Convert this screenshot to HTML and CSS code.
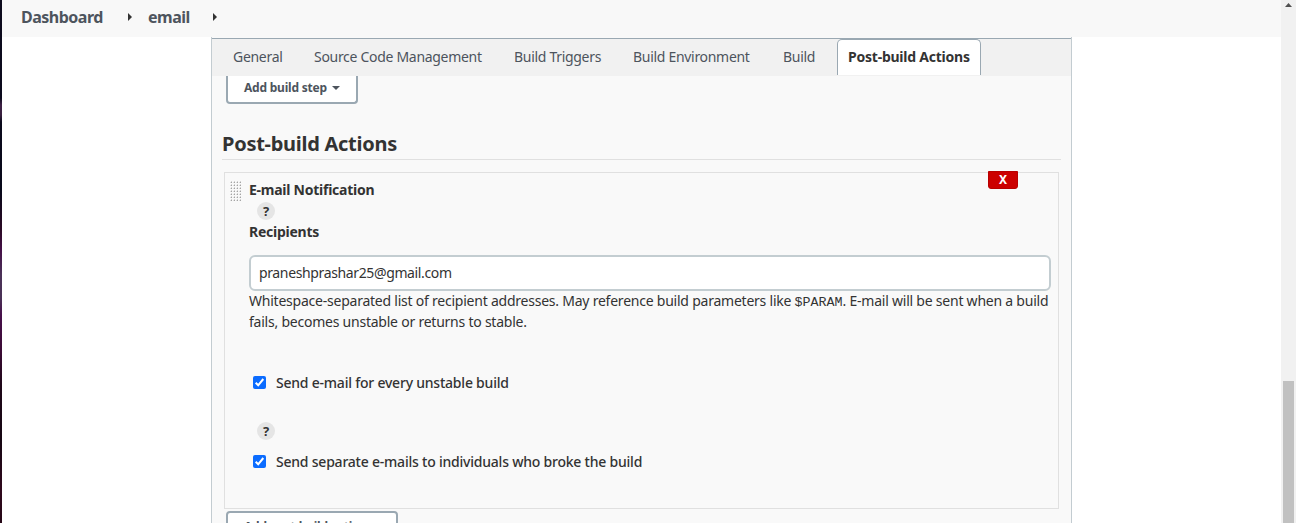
FILE: index.html
```html
<!DOCTYPE html>
<html lang="en">
<head>
<meta charset="utf-8">
<title>email Config</title>
<link rel="stylesheet" href="styles.css">
</head>
<body>
<div class="desktop-edge"></div>
<div class="page">
  <nav class="breadcrumbs">
    <a class="crumb crumb-home">Dashboard</a>
    <svg class="crumb-arrow" width="4" height="8" viewBox="0 0 4 8"><path d="M0 0L4 4L0 8Z" fill="#333"/></svg>
    <a class="crumb crumb-job">email</a>
    <svg class="crumb-arrow" width="4" height="8" viewBox="0 0 4 8"><path d="M0 0L4 4L0 8Z" fill="#333"/></svg>
  </nav>
  <main class="config">
    <div class="tabs">
      <a class="tab tab-general">General</a>
      <a class="tab tab-scm">Source Code Management</a>
      <a class="tab tab-triggers">Build Triggers</a>
      <a class="tab tab-env">Build Environment</a>
      <a class="tab tab-build">Build</a>
      <a class="tab tab-active">Post-build Actions</a>
    </div>
    <div class="form">
      <button class="menu-button step-button"><span>Add build step</span><svg width="8" height="4" viewBox="0 0 8 4"><path d="M0 0H8L4 4Z" fill="#4d545d"/></svg></button>
      <h2 class="section-title">Post-build Actions</h2>
      <section class="chunk">
        <svg class="drag-handle" width="12" height="21">
          <defs><pattern id="grip" width="3" height="3" patternUnits="userSpaceOnUse"><rect x="1" width="1" height="1" fill="#d4d4d4"/><rect y="1" width="1" height="1" fill="#dedede"/><rect x="1" y="1" width="1" height="1" fill="#a5a5a5"/></pattern></defs>
          <rect width="12" height="21" fill="url(#grip)"/>
        </svg>
        <button class="delete">X</button>
        <div class="fields">
          <div class="label">E-mail Notification</div>
          <span class="help">?</span>
          <div class="label">Recipients</div>
          <div class="input">praneshprashar25@gmail.com</div>
          <p class="hint">Whitespace-separated list of recipient addresses. May reference build parameters like <code>$PARAM</code>. E-mail will be sent when a build<br>fails, becomes unstable or returns to stable.</p>
          <label class="check check-unstable"><svg width="13" height="13" viewBox="0 0 13 13"><rect width="13" height="13" rx="2" fill="#0b6cff"/><path d="M2.7 6.8L5.2 9.3L10.3 3" fill="none" stroke="#fff" stroke-width="2"/></svg><span>Send e-mail for every unstable build</span></label>
          <span class="help help-second">?</span>
          <label class="check"><svg width="13" height="13" viewBox="0 0 13 13"><rect width="13" height="13" rx="2" fill="#0b6cff"/><path d="M2.7 6.8L5.2 9.3L10.3 3" fill="none" stroke="#fff" stroke-width="2"/></svg><span>Send separate e-mails to individuals who broke the build</span></label>
        </div>
      </section>
      <button class="menu-button action-button"><span>Add post-build action</span><svg width="8" height="4" viewBox="0 0 8 4"><path d="M0 0H8L4 4Z" fill="#4d545d"/></svg></button>
    </div>
  </main>
</div>
<div class="scrollbar">
  <svg class="scroll-up" width="7" height="4" viewBox="0 0 7 4"><path d="M0 4L3.5 0L7 4Z" fill="#505050"/></svg>
  <div class="scroll-thumb"></div>
</div>
</body>
</html>
```

FILE: styles.css
```css
* { box-sizing: border-box; }
body {
  margin: 0;
  width: 1296px;
  height: 523px;
  display: flex;
  overflow: hidden;
  background: #fff;
  color: #333;
  font: 14px/21px "Noto Sans", "Open Sans", sans-serif;
  white-space: nowrap;
}
svg { display: block; flex: none; }
button { font-family: inherit; margin: 0; }

.desktop-edge {
  flex: 0 0 2px;
  background: linear-gradient(#0d0b1d 0, #0b0a1d 98px, #3e2145 105px, #38203f 115px, #0b0a1c 122px, #08091a 190px, #2b0a26 230px, #451048 250px, #4b3258 275px, #4a3156 298px, #47104b 315px, #3c0b36 350px, #1f0819 385px, #160713 440px, #30091d 490px, #260817 523px);
}
.page { flex: 1; display: flex; flex-direction: column; min-width: 0; }

.breadcrumbs {
  flex: 0 0 37px;
  display: flex;
  align-items: center;
  padding: 0 0 3px 19px;
  background: #f8f8f8;
}
.crumb { color: #4d545d; font-size: 16px; font-weight: 700; line-height: 24px; letter-spacing: -0.5px; }
.crumb-home { width: 107px; }
.crumb-job { width: 65px; margin-left: 16px; }

.config {
  flex: 1;
  display: flex;
  flex-direction: column;
  width: 861px;
  margin-left: 209px;
  border: solid #c3ccd1;
  border-width: 0 1px;
  background: #f9f9f9;
}
.tabs {
  flex: 0 0 38px;
  display: flex;
  margin-top: 1px;
  padding-left: 21px;
  border-top: 1px solid #9aa8b2;
  background: #f1f1f1;
}
.tab { padding-top: 7px; color: #4d545d; letter-spacing: -0.3px; }
.tab-general { width: 81px; }
.tab-scm { width: 200px; }
.tab-triggers { width: 119px; }
.tab-env { width: 150px; }
.tab-build { width: 54px; }
.tab-active {
  width: 144px;
  height: 36px;
  padding: 6px 0 0 10px;
  border: 1px solid #9aa8b2;
  border-bottom: 0;
  border-radius: 5px 5px 0 0;
  background: #fff;
  color: #333;
  font-weight: 700;
  letter-spacing: -0.23px;
}

.form { display: flex; flex-direction: column; align-items: flex-start; padding-left: 10px; }
.menu-button {
  display: flex;
  align-items: center;
  gap: 5px;
  margin-left: 4px;
  padding: 0 0 0 16px;
  border: 2px solid #9aa8b2;
  border-radius: 4px;
  background: #fff;
  color: #4d545d;
  font-size: 12px;
  font-weight: 700;
  line-height: 18px;
  letter-spacing: -0.22px;
}
.step-button { width: 132px; height: 28px; border-top: 0; border-radius: 0 0 4px 4px; padding-bottom: 3px; }
.action-button { width: 172px; height: 32px; margin-top: 2px; }

.section-title {
  width: 839px;
  height: 31px;
  margin: 25px 0 12px;
  border-bottom: 1px solid #e0e0e0;
  font-size: 20px;
  line-height: 30px;
  font-weight: 700;
  letter-spacing: -0.27px;
}
.chunk {
  position: relative;
  display: flex;
  width: 835px;
  height: 337px;
  margin-left: 2px;
  padding-left: 5px;
  border: 1px solid #e0e0e0;
}
.drag-handle { margin-top: 8px; }
.fields { display: flex; flex-direction: column; align-items: flex-start; width: 802px; margin-left: 7px; padding-top: 6px; }
.delete {
  position: absolute;
  top: -2px;
  right: 40px;
  width: 30px;
  height: 18px;
  padding: 0;
  border: 1px solid #b80000;
  border-radius: 0 0 3px 3px;
  background: #c00;
  color: #fff;
  font-size: 12px;
  line-height: 16px;
  font-weight: 700;
}
.label { font-weight: 700; letter-spacing: -0.25px; }
.help {
  width: 18px;
  height: 18px;
  margin: 2px 0 1px 8px;
  border-radius: 50%;
  background: #e5e5e5;
  font-size: 13px;
  font-weight: 700;
  line-height: 18px;
  text-align: center;
}
.input {
  width: 802px;
  height: 36px;
  margin-top: 13px;
  padding: 5px 8px;
  border: 2px solid #c3cdd1;
  border-radius: 6px;
  background: #fff;
  letter-spacing: -0.37px;
}
.hint { height: 42px; margin: -1px 0 0; letter-spacing: -0.23px; }
.hint code { font-family: "Liberation Mono", monospace; font-size: 13.33px; line-height: 1; letter-spacing: 0; }
.check { display: flex; align-items: center; gap: 10px; padding-left: 4px; font-weight: 500; letter-spacing: -0.22px; }
.check-unstable { margin-top: 40px; }
.help-second { margin: 29px 0 11px 8px; }

.scrollbar { flex: 0 0 15px; padding: 3px 2px 0; background: #f1f1f1; }
.scroll-up { margin-left: 2px; }
.scroll-thumb { width: 11px; height: 142px; margin-top: 374px; background: #c1c1c1; }
```
